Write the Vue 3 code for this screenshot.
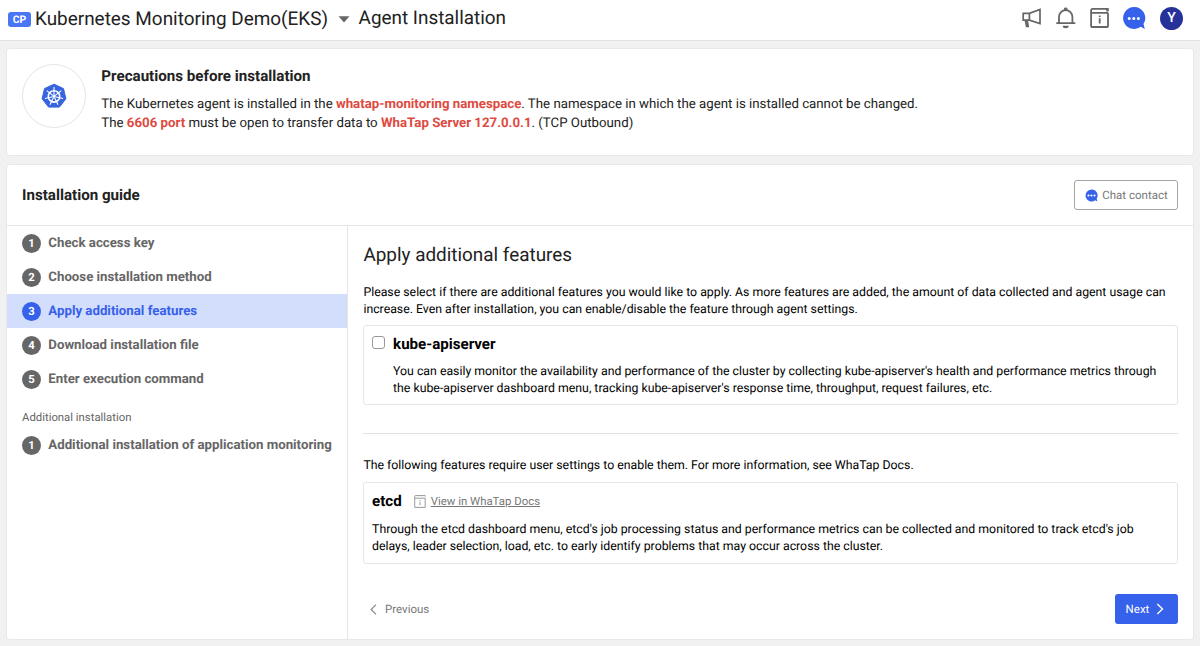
<script setup>
const steps = [
  { n: 1, label: 'Check access key' },
  { n: 2, label: 'Choose installation method' },
  { n: 3, label: 'Apply additional features', active: true },
  { n: 4, label: 'Download installation file' },
  { n: 5, label: 'Enter execution command' },
]
const spokes = [0, 51.43, 102.86, 154.29, 205.71, 257.14, 308.57]
</script>

<template>
  <div class="page">
    <header class="topbar">
      <span class="badge">CP</span>
      <span class="project">Kubernetes Monitoring Demo(EKS)</span>
      <svg class="caret" width="12" height="7" viewBox="0 0 12 7"><path d="M.5.3h11L6 6.5z" fill="#666" /></svg>
      <span class="crumb">Agent Installation</span>
      <nav class="tools">
        <svg width="22" height="22" viewBox="0 0 22 22" fill="none" stroke="#666" stroke-width="1.7">
          <path d="M2.2 6.4h6.2L19 2.4v14.2L8.4 13.2H2.2zM8.4 6.4v6.8M4.4 13.4l1.2 5.9h1.6L6.2 13.4" />
        </svg>
        <svg width="22" height="22" viewBox="0 0 22 22" fill="none" stroke="#666" stroke-width="1.8">
          <path d="M1.3 16.1h19M4 16V9.8a6.7 6.7 0 0 1 13.4 0V16" />
          <path d="M8.9 3.2V1.8a1.8 1.3 0 0 1 3.6 0v1.4zM7.7 18.8h6a3 2.5 0 0 1-6 0z" fill="#666" stroke="none" />
        </svg>
        <svg width="22" height="22" viewBox="0 0 22 22" fill="none" stroke="#666" stroke-width="1.8">
          <path d="M19 5.8v13.4q0 .8-.8.8H2.9q-.8 0-.8-.8V3.4Q2.1 1.9 3.6 1.9h15.2v1.8h-1.6M2.3 5.8H19" />
          <path d="M10.7 11.2v5.2M10.7 8.4v1.6" />
        </svg>
        <svg width="24" height="24" viewBox="0 0 24 24">
          <path d="M12 1a11 11 0 1 0 6.7 19.8l4.1 2.1-1.3-5A11 11 0 0 0 12 1z" fill="#3561eb" />
          <g fill="#fff"><circle cx="7.2" cy="12.4" r="1.5" /><circle cx="11.8" cy="12.4" r="1.5" /><circle cx="16.4" cy="12.4" r="1.5" /></g>
        </svg>
        <span class="avatar">Y</span>
      </nav>
    </header>

    <section class="card notice">
      <div class="logo">
        <svg width="26" height="26" viewBox="0 0 26 26">
          <path d="M13 1.2 22.5 5.6 24.9 15.8 18.4 24.1H7.6L1.1 15.8 3.5 5.6z" fill="#3763df" stroke="#3763df" stroke-linejoin="round" />
          <g stroke="#fff" fill="none">
            <circle cx="13" cy="13.4" r="5.7" stroke-width="1.6" />
            <path v-for="a in spokes" :key="a" d="M13 12.2V4.1" stroke-width="1.1" :transform="`rotate(${a} 13 13.4)`" />
          </g>
          <circle cx="13" cy="13.4" r="1.3" fill="#fff" />
        </svg>
      </div>
      <div class="notice-text">
        <h2>Precautions before installation</h2>
        <p class="n1">The Kubernetes agent is installed in the <b>whatap-monitoring namespace</b>. The namespace in which the agent is installed cannot be changed.</p>
        <p class="n2">The <b>6606 port</b> must be open to transfer data to <b>WhaTap Server 127.0.0.1</b>. (TCP Outbound)</p>
      </div>
    </section>

    <section class="card guide">
      <div class="guide-head">
        <h2>Installation guide</h2>
        <button class="chat">
          <svg width="13" height="13" viewBox="0 0 24 24">
            <path d="M12 1a11 11 0 1 0 6.7 19.8l4.1 2.1-1.3-5A11 11 0 0 0 12 1z" fill="#3561eb" />
            <g fill="#fff"><circle cx="6.4" cy="12" r="2" /><circle cx="12" cy="12" r="2" /><circle cx="17.6" cy="12" r="2" /></g>
          </svg>
          <span>Chat contact</span>
        </button>
      </div>
      <div class="guide-body">
        <aside>
          <div v-for="s in steps" :key="s.n" class="step" :class="{ active: s.active }">
            <i>{{ s.n }}</i><span>{{ s.label }}</span>
          </div>
          <div class="group">Additional installation</div>
          <div class="step"><i>1</i><span>Additional installation of application monitoring</span></div>
        </aside>
        <main>
          <h1>Apply additional features</h1>
          <p class="copy intro">Please select if there are additional features you would like to apply. As more features are added, the amount of data collected and agent usage can<br>increase. Even after installation, you can enable/disable the feature through agent settings.</p>
          <div class="box api">
            <span class="check"></span>
            <div>
              <h3>kube-apiserver</h3>
              <p class="copy">You can easily monitor the availability and performance of the cluster by collecting kube-apiserver's health and performance metrics through<br>the kube-apiserver dashboard menu, tracking kube-apiserver's response time, throughput, request failures, etc.</p>
            </div>
          </div>
          <hr>
          <p class="copy follow">The following features require user settings to enable them. For more information, see WhaTap Docs.</p>
          <div class="box etcd">
            <div class="etcd-head">
              <h3>etcd</h3>
              <svg width="12" height="13" viewBox="0 0 12 13" fill="none" stroke="#999">
                <path d="M11.2 3.2v9.2H.7V1.2Q.7.6 1.3.6h9.9v1M.9 3.2h10.3M6 6.8v3.3M6 5v1" />
              </svg>
              <a>View in WhaTap Docs</a>
            </div>
            <p class="copy">Through the etcd dashboard menu, etcd's job processing status and performance metrics can be collected and monitored to track etcd's job<br>delays, leader selection, load, etc. to early identify problems that may occur across the cluster.</p>
          </div>
          <footer>
            <button class="prev">
              <svg width="7" height="11" viewBox="0 0 7 11" fill="none" stroke="#888" stroke-width="1.2"><path d="M6 .7 1.2 5.5 6 10.3" /></svg>
              <span>Previous</span>
            </button>
            <button class="next">
              <span>Next</span>
              <svg width="8" height="12" viewBox="0 0 8 12" fill="none" stroke="#fff" stroke-width="1.4"><path d="M1.3 1 6.5 6 1.3 11" /></svg>
            </button>
          </footer>
        </main>
      </div>
    </section>
  </div>
</template>

<style>
body { margin: 0; }
</style>

<style scoped>
* { box-sizing: border-box; }
h1, h2, h3, p { margin: 0; }
button { font: inherit; cursor: pointer; text-rendering: inherit; }
.page { width: 1200px; height: 646px; overflow: hidden; background: #f1f1f1; font-family: Roboto, sans-serif; text-rendering: geometricPrecision; color: #222; display: flex; flex-direction: column; white-space: nowrap; }
.topbar { height: 41px; flex: none; background: #fff; border-bottom: 1px solid #e2e2e2; display: flex; align-items: center; padding: 0 17px 4px 8px; }
.badge { width: 23px; height: 15px; border-radius: 3px; background: #4a75f5; color: #fff; font-size: 10.4px; font-weight: 700; line-height: 15px; text-align: center; margin: 2px 4px 0 0; }
.project { font-size: 18.93px; width: 303px; }
.caret { margin-top: 3px; }
.crumb { font-size: 18.9px; margin-left: 8.6px; margin-top: -1px; }
.tools { margin-left: auto; display: flex; align-items: center; gap: 12px; }
.tools svg:nth-child(4) { margin-left: -1px; }
.avatar { width: 23px; height: 23px; border-radius: 50%; background: #26329a; color: #fff; font-size: 14px; font-weight: 500; text-align: center; line-height: 23px; margin: 0 0 0 2px; }
.card { margin: 0 6px; background: #fff; border: 1px solid #e8e8e8; border-radius: 3px; }
.notice { height: 108px; margin-top: 7px; padding: 15px; display: flex; flex: none; }
.logo { width: 64px; height: 64px; border: 1px solid #e5e5e5; border-radius: 50%; display: flex; align-items: center; justify-content: center; }
.notice-text { margin-left: 15.3px; padding-top: 1px; }
h2 { font-size: 15.15px; line-height: 22px; font-weight: 700; }
.notice p { font-size: 13.25px; line-height: 19px; }
.notice .n1 { margin-top: 8px; }
.notice b { color: #de4a41; }
.guide { height: 476px; margin-top: 8px; flex: none; }
.guide-head { height: 61px; border-bottom: 1px solid #e5e5e5; padding: 0 15px; display: flex; align-items: center; justify-content: space-between; }
.chat { width: 104px; height: 30px; background: #fff; border: 1px solid #a5a5a5; border-radius: 3px; padding: 0 0 0 1px; display: flex; align-items: center; justify-content: center; gap: 4px; color: #777; font-size: 11.5px; }
.guide-body { display: flex; height: 413px; }
aside { width: 341px; border-right: 1px solid #e5e5e5; }
.step { height: 34px; padding-left: 15px; display: flex; align-items: center; font-size: 13.26px; font-weight: 700; color: #666; }
.step span { line-height: 16px; padding-top: 1px; }
.step i { width: 19px; height: 19px; border-radius: 50%; background: #666; color: #fff; font-style: normal; font-size: 11.3px; line-height: 19px; text-align: center; margin-right: 7.3px; }
.step.active { background: #d3ddfc; color: #3561eb; }
.step.active i { background: #3561eb; }
.group { height: 32px; padding: 12px 15px 0; font-size: 11.34px; line-height: 19px; color: #666; }
main { flex: 1; padding: 17px 15px 0 15.4px; color: #000; }
h1 { font-size: 18.9px; line-height: 24px; font-weight: 400; color: #222; }
.copy { font-size: 12.3px; line-height: 17px; }
.intro { margin-top: 18px; }
.box { border: 1px solid #e6e6e6; border-radius: 3px; padding: 8px 8px 8px 7.7px; }
.api { height: 80px; margin-top: 6px; display: flex; }
.check { width: 13px; height: 13px; border: 1px solid #999; border-radius: 3px; margin: 2px 8px 0 0; }
h3 { font-size: 15.1px; line-height: 20px; font-weight: 700; }
.api .copy { margin-top: 10px; }
hr { border: 0; border-top: 1px solid #e2e2e2; margin: 28px 0 24px; }
.follow { margin-bottom: 7px; }
.etcd { height: 82px; }
.etcd-head { display: flex; align-items: center; }
.etcd-head svg { margin: 1px 5px 0 12px; }
.etcd-head a { font-size: 11.4px; color: #777; text-decoration: underline; }
.etcd .copy { margin-top: 11px; }
footer { margin-top: 30px; display: flex; justify-content: space-between; align-items: center; font-size: 11.5px; }
.prev { border: 0; background: none; padding: 0 0 0 6.6px; display: flex; align-items: center; gap: 8px; color: #777; }
.next { width: 63px; height: 30px; border: 0; border-radius: 3px; background: #3561eb; color: #fff; display: flex; align-items: center; justify-content: center; gap: 7px; padding: 0 3px 0 0; }
</style>
